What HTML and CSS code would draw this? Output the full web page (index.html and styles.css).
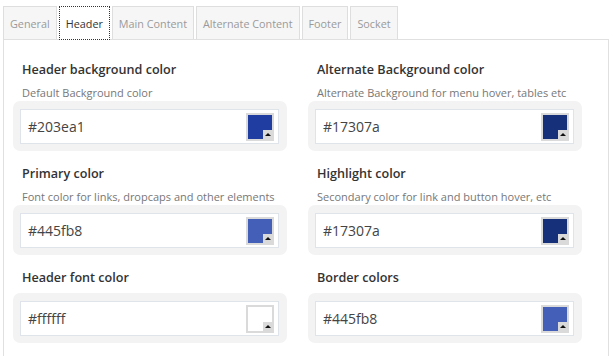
FILE: index.html
```html
<!DOCTYPE html>
<html>
<head>
<meta charset="utf-8">
<link rel="stylesheet" href="styles.css">
</head>
<body>
<div class="wrap">
  <div class="tabs">
    <div class="tab">General</div>
    <div class="tab active">Header</div>
    <div class="tab">Main Content</div>
    <div class="tab">Alternate Content</div>
    <div class="tab">Footer</div>
    <div class="tab">Socket</div>
  </div>
  <div class="panel">
    <div class="grid">
      <div class="field">
        <h4 class="title">Header background color</h4>
        <p class="desc">Default Background color</p>
        <div class="box"><div class="input"><span class="val">#203ea1</span><span class="swatch"><span class="fill" style="background:#203ea1"><span class="corner"></span></span></span></div></div>
      </div>
      <div class="field">
        <h4 class="title">Alternate Background color</h4>
        <p class="desc">Alternate Background for menu hover, tables etc</p>
        <div class="box"><div class="input"><span class="val">#17307a</span><span class="swatch"><span class="fill" style="background:#17307a"><span class="corner"></span></span></span></div></div>
      </div>
      <div class="field">
        <h4 class="title">Primary color</h4>
        <p class="desc">Font color for links, dropcaps and other elements</p>
        <div class="box"><div class="input"><span class="val">#445fb8</span><span class="swatch"><span class="fill" style="background:#445fb8"><span class="corner"></span></span></span></div></div>
      </div>
      <div class="field">
        <h4 class="title">Highlight color</h4>
        <p class="desc">Secondary color for link and button hover, etc</p>
        <div class="box"><div class="input"><span class="val">#17307a</span><span class="swatch"><span class="fill" style="background:#17307a"><span class="corner"></span></span></span></div></div>
      </div>
      <div class="field">
        <h4 class="title">Header font color</h4>
        <div class="box"><div class="input"><span class="val">#ffffff</span><span class="swatch"><span class="fill" style="background:#ffffff"><span class="corner"></span></span></span></div></div>
      </div>
      <div class="field">
        <h4 class="title">Border colors</h4>
        <div class="box"><div class="input"><span class="val">#445fb8</span><span class="swatch"><span class="fill" style="background:#445fb8"><span class="corner"></span></span></span></div></div>
      </div>
    </div>
  </div>
</div>
</body>
</html>
```

FILE: styles.css
```css
html, body {
  margin: 0;
  padding: 0;
  background: #fff;
  font-family: "Open Sans", "DejaVu Sans", sans-serif;
}
.wrap {
  padding: 6px 0 0 3px;
}
.tabs {
  display: flex;
  gap: 2px;
  height: 33px;
}
.tab {
  box-sizing: border-box;
  height: 33px;
  line-height: 33px;
  padding: 0 6px;
  border: 1px solid #dedede;
  border-bottom: none;
  background: #f6f6f6;
  color: #9a9a9a;
  font-size: 10.8px;
}
.tab.active {
  position: relative;
  z-index: 1;
  height: 34px;
  background: #fff;
  color: #333;
  border-color: transparent;
  outline: 1px dotted #333;
  outline-offset: -1px;
}
.panel {
  box-sizing: border-box;
  width: 606px;
  height: 320px;
  border: 1px solid #e0e0e0;
  border-bottom: none;
  padding: 21px 0 0 9px;
}
.grid {
  display: grid;
  grid-template-columns: 274px 274px;
  column-gap: 21px;
  row-gap: 14px;
}
.title {
  margin: 0;
  font-size: 12.6px;
  line-height: 18px;
  font-weight: 600;
  color: #333;
  padding-left: 9px;
}
.desc {
  margin: 6px 0 0 0;
  font-size: 11px;
  line-height: 16px;
  color: #777;
  padding-left: 9px;
}
.field .title + .box {
  margin-top: 6px;
}
.box {
  background: #f3f3f4;
  border-radius: 7px;
  padding: 8px 8px 7px 7px;
}
.input {
  box-sizing: border-box;
  height: 35px;
  border: 1px solid #dfe4ea;
  background: #fff;
  display: flex;
  align-items: center;
  justify-content: space-between;
  padding: 0 4px 0 7px;
}
.val {
  font-size: 14px;
  color: #444;
}
.swatch {
  box-sizing: border-box;
  width: 28px;
  height: 28px;
  padding: 2px;
  background: #dadada;
  display: block;
}
.fill {
  display: block;
  position: relative;
  width: 24px;
  height: 24px;
}
.corner {
  position: absolute;
  right: 0;
  bottom: 0;
  width: 9px;
  height: 9px;
  background: #dadada;
}
.corner::after {
  content: "";
  position: absolute;
  left: 2px;
  top: 3px;
  width: 0;
  height: 0;
  border-left: 3px solid transparent;
  border-right: 3px solid transparent;
  border-bottom: 3px solid #111;
}
```
